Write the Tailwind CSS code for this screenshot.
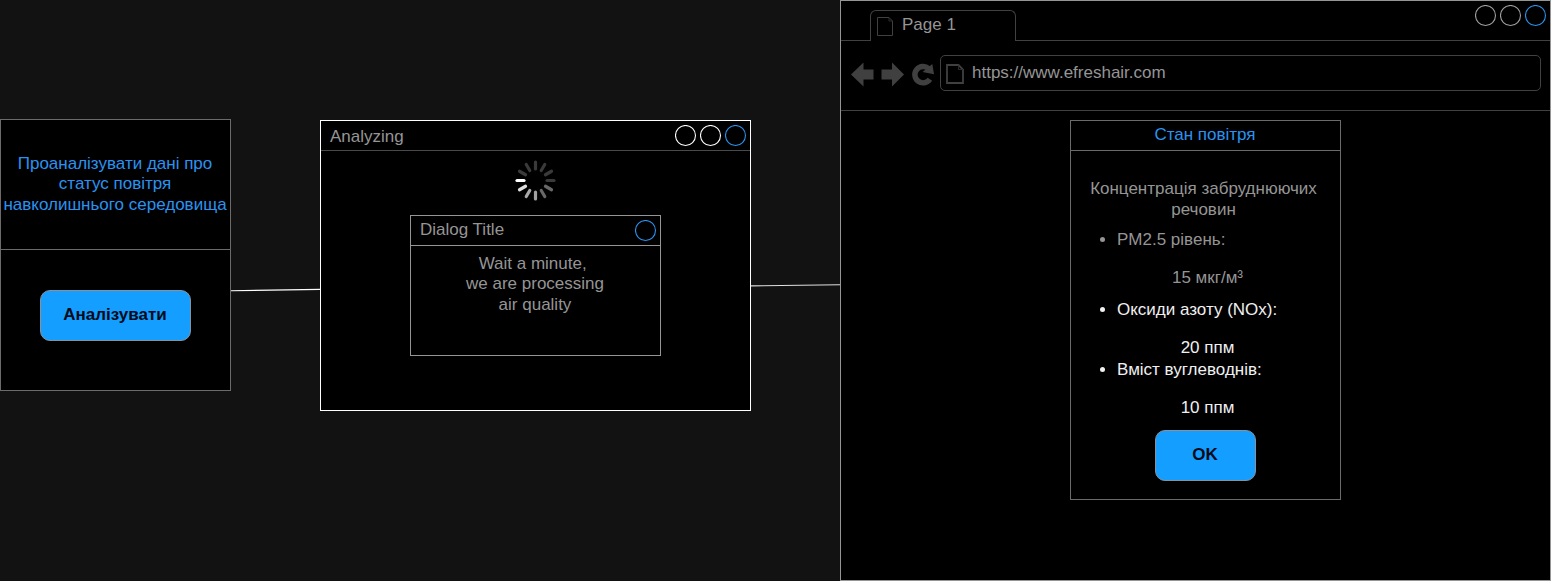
<!DOCTYPE html>
<html lang="uk">
<head>
<meta charset="utf-8">
<title>Air quality wireframe</title>
<script src="https://cdn.jsdelivr.net/npm/@tailwindcss/browser@4"></script>
</head>
<body class="bg-[#121212] overflow-hidden font-['Liberation_Sans',Arial,sans-serif] text-[17px] leading-[20.4px] text-[#959595]">
<main class="flex items-start w-[1551px] h-[581px]">

  <section class="mt-[119px] w-[231px] h-[272px] shrink-0 flex flex-col bg-black border border-[#6b6b6b]">
    <div class="h-[130px] border-b border-[#6b6b6b] flex items-center justify-center pr-px text-center text-[#2a93f0] whitespace-nowrap">
      <p>Проаналізувати дані про<br>статус повітря<br>навколишнього середовища</p>
    </div>
    <div class="pt-10 flex justify-center">
      <button class="w-[151px] h-[51px] pb-px pr-px rounded-[10px] border border-[#8a9299] bg-[#149eff] text-[#000a18] font-bold">Аналізувати</button>
    </div>
  </section>

  <svg class="mt-[280px] w-[89px] h-5 shrink-0" viewBox="0 0 89 20"><path d="M0 10.7L89 9.4" stroke="#fff" stroke-width="1.1"/></svg>

  <section class="mt-[120px] w-[431px] h-[291px] shrink-0 flex flex-col items-center bg-black border border-white">
    <header class="w-full h-[30px] shrink-0 border-b border-[#4a4a4a] flex items-center justify-between pl-[9px] pr-[3px]">
      <h2 class="pt-[3px]">Analyzing</h2>
      <div class="flex gap-[3px]">
        <svg class="w-[22px] h-[22px]" viewBox="0 0 22 22" fill="none"><circle cx="10.5" cy="10.5" r="10" stroke="#fff" stroke-width="1.1"/></svg>
        <svg class="w-[22px] h-[22px]" viewBox="0 0 22 22" fill="none"><circle cx="10.5" cy="10.5" r="10" stroke="#fff" stroke-width="1.1"/></svg>
        <svg class="w-[22px] h-[22px]" viewBox="0 0 22 22" fill="none"><circle cx="10.5" cy="10.5" r="10" stroke="#2a93f0" stroke-width="1.1"/></svg>
      </div>
    </header>
    <svg class="mt-[9px] w-[42px] h-[42px] shrink-0" viewBox="-20.5 -20.5 42 42" stroke-width="3.2" stroke-linecap="round">
      <path d="M-18.5 0H-11.5" stroke="#fff"/>
      <path d="M-18.5 0H-11.5" stroke="#dedede" transform="rotate(-30)"/>
      <path d="M-18.5 0H-11.5" stroke="#a8a8a8" transform="rotate(-60)"/>
      <path d="M-18.5 0H-11.5" stroke="#a0a0a0" transform="rotate(-90)"/>
      <path d="M-18.5 0H-11.5" stroke="#686868" transform="rotate(-120)"/>
      <path d="M-18.5 0H-11.5" stroke="#686868" transform="rotate(-150)"/>
      <path d="M-18.5 0H-11.5" stroke="#3a3a3a" transform="rotate(180)"/>
      <path d="M-18.5 0H-11.5" stroke="#3a3a3a" transform="rotate(150)"/>
      <path d="M-18.5 0H-11.5" stroke="#3a3a3a" transform="rotate(120)"/>
      <path d="M-18.5 0H-11.5" stroke="#3a3a3a" transform="rotate(90)"/>
      <path d="M-18.5 0H-11.5" stroke="#3a3a3a" transform="rotate(60)"/>
      <path d="M-18.5 0H-11.5" stroke="#3a3a3a" transform="rotate(30)"/>
    </svg>
    <div class="mt-[13px] w-[251px] h-[141px] shrink-0 border border-[#959595]">
      <header class="h-[30px] border-b border-[#959595] flex items-center justify-between pl-[9px] pr-[3px]">
        <h3>Dialog Title</h3>
        <svg class="w-[22px] h-[22px]" viewBox="0 0 22 22" fill="none"><circle cx="10.5" cy="10.5" r="10" stroke="#2a93f0" stroke-width="1.1"/></svg>
      </header>
      <p class="pt-[8px] pr-px text-center">Wait a minute,&nbsp;<br>we are processing<br>air quality</p>
    </div>
  </section>

  <svg class="mt-[275px] w-[89px] h-5 shrink-0" viewBox="0 0 89 20"><path d="M0 10.9L89 9.8" stroke="#e0e0e0" stroke-width="1.1"/></svg>

  <section class="w-[711px] h-[581px] shrink-0 flex flex-col bg-black border border-[#959595]">
    <header class="h-10 shrink-0 flex">
      <div class="w-[29px] border-b border-[#414141]"></div>
      <div class="mt-[9px] w-[146px] border border-b-0 border-[#414141] rounded-t-[6px] flex pl-[6px]">
        <svg class="mt-[6px] w-[16px] h-[19px] shrink-0" viewBox="0 0 16 19" fill="none" stroke="#404040"><path d="M.5 .5H12L15.5 4V18.5H.5Z"/><path d="M12 .5V4H15.5" stroke="#2c2c2c"/></svg>
        <span class="ml-[9px] mt-[4px]">Page 1</span>
      </div>
      <div class="flex-1 border-b border-[#414141] flex justify-end gap-[3px] pt-[4px] pr-[3px]">
        <svg class="w-[22px] h-[22px]" viewBox="0 0 22 22" fill="none"><circle cx="10.5" cy="10.5" r="10" stroke="#a0a0a0" stroke-width="1.1"/></svg>
        <svg class="w-[22px] h-[22px]" viewBox="0 0 22 22" fill="none"><circle cx="10.5" cy="10.5" r="10" stroke="#a0a0a0" stroke-width="1.1"/></svg>
        <svg class="w-[22px] h-[22px]" viewBox="0 0 22 22" fill="none"><circle cx="10.5" cy="10.5" r="10" stroke="#2a93f0" stroke-width="1.1"/></svg>
      </div>
    </header>
    <div class="h-[70px] shrink-0 border-b border-[#414141] flex pl-[10px] pt-[14px]">
      <svg class="mt-[6px] w-[89px] h-[28px] shrink-0" viewBox="851 61 89 28" fill="#404040">
        <path d="M851 74.5L863.5 62.5V69.5H873.5V79.5H863.5V86.5Z"/>
        <path d="M904 74.5L892 62.5V69.5H881.5V79.5H892V86.5Z"/>
        <path d="M929.9 79.2A8.2 8.2 0 1 1 928.6 68.6" fill="none" stroke="#404040" stroke-width="5.4"/>
        <path d="M932.3 64L934 74.3L922.5 72Z"/>
      </svg>
      <div class="w-[601px] h-[36px] border border-[#414141] rounded-[5px] flex items-center pl-[5px]">
        <svg class="mt-px w-[18px] h-[20px] shrink-0" viewBox="0 0 18 20" fill="none" stroke="#404040" stroke-width="1.8"><path d="M1 1H12.5L17 5.5V19H1Z"/><path d="M12.5 1V5.5H17" stroke="#2c2c2c" stroke-width="1"/></svg>
        <span class="ml-[8px] mt-px">https://www.efreshair.com</span>
      </div>
    </div>
    <article class="mt-[9px] ml-[229px] w-[271px] h-[380px] shrink-0 border border-[#6b6b6b] flex flex-col">
      <h2 class="h-[30px] shrink-0 border-b border-[#6b6b6b] pt-[4px] pr-px text-center text-[#2a93f0]">Стан повітря</h2>
      <p class="mt-[27px] pr-[4px] leading-[21px] text-center">Концентрація забруднюючих<br>речовин</p>
      <div class="mt-[10px] h-[20px] pl-[29px] flex items-center"><i class="-mt-px size-[5px] rounded-full bg-[#959595]"></i><span class="ml-[12px]">PM2.5 рівень:</span></div>
      <p class="mt-[18px] h-[20px] pl-[4px] text-center">15 мкг/м³</p>
      <div class="mt-[12px] h-[20px] pl-[29px] flex items-center text-[#f0f0f0]"><i class="-mt-px size-[5px] rounded-full bg-[#f0f0f0]"></i><span class="ml-[12px]">Оксиди азоту (NOx):</span></div>
      <p class="mt-[18px] h-[20px] pl-[4px] text-center text-[#f0f0f0]">20 ппм</p>
      <div class="mt-[2px] h-[20px] pl-[29px] flex items-center text-[#f0f0f0]"><i class="-mt-px size-[5px] rounded-full bg-[#f0f0f0]"></i><span class="ml-[12px]">Вміст вуглеводнів:</span></div>
      <p class="mt-[18px] h-[20px] pl-[4px] text-center text-[#f0f0f0]">10 ппм</p>
      <button class="mt-[12px] self-center w-[101px] h-[51px] shrink-0 pb-px pr-px rounded-[10px] border border-[#8a9299] bg-[#149eff] text-[#000a18] font-bold">OK</button>
    </article>
  </section>
</main>
</body>
</html>
